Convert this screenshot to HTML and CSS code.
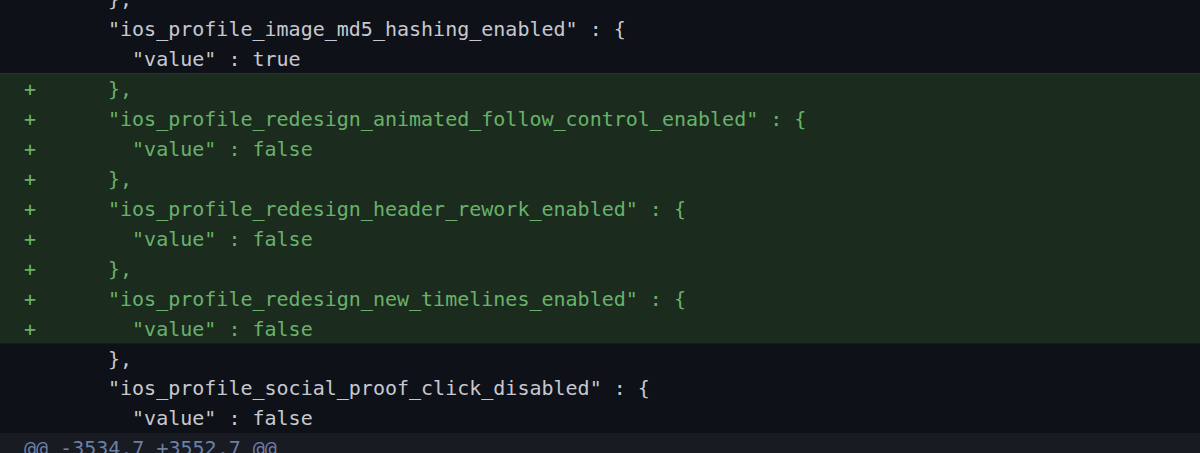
FILE: index.html
```html
<!DOCTYPE html>
<html>
<head>
<meta charset="utf-8">
<link rel="stylesheet" href="styles.css">
</head>
<body>
<div class="diff">
  <div class="row"><span class="sign"></span><span class="code">},</span></div>
  <div class="row"><span class="sign"></span><span class="code">"ios_profile_image_md5_hashing_enabled" : {</span></div>
  <div class="row"><span class="sign"></span><span class="code">  "value" : true</span></div>
  <div class="added">
    <div class="row"><span class="sign">+</span><span class="code">},</span></div>
    <div class="row"><span class="sign">+</span><span class="code">"ios_profile_redesign_animated_follow_control_enabled" : {</span></div>
    <div class="row"><span class="sign">+</span><span class="code">  "value" : false</span></div>
    <div class="row"><span class="sign">+</span><span class="code">},</span></div>
    <div class="row"><span class="sign">+</span><span class="code">"ios_profile_redesign_header_rework_enabled" : {</span></div>
    <div class="row"><span class="sign">+</span><span class="code">  "value" : false</span></div>
    <div class="row"><span class="sign">+</span><span class="code">},</span></div>
    <div class="row"><span class="sign">+</span><span class="code">"ios_profile_redesign_new_timelines_enabled" : {</span></div>
    <div class="row"><span class="sign">+</span><span class="code">  "value" : false</span></div>
  </div>
  <div class="row"><span class="sign"></span><span class="code">},</span></div>
  <div class="row"><span class="sign"></span><span class="code">"ios_profile_social_proof_click_disabled" : {</span></div>
  <div class="row"><span class="sign"></span><span class="code">  "value" : false</span></div>
  <div class="hunk">@@ -3534,7 +3552,7 @@</div>
</div>
</body>
</html>
```
FILE: styles.css
```css
html, body {
  margin: 0;
  padding: 0;
  background: #0f1119;
  overflow: hidden;
}
.diff {
  margin-top: -16px;
  font-family: "DejaVu Sans Mono", monospace;
  font-size: 20px;
  line-height: 30px;
  color: #c6c9cf;
}
.row {
  display: flex;
  height: 30px;
  white-space: pre;
}
.sign {
  width: 108px;
  padding-left: 24px;
  box-sizing: border-box;
  flex: none;
}
.code {
  white-space: pre;
}
.added {
  background: #1b2c1f;
  color: #69b26a;
  border-top: 1px solid #26362a;
  margin-top: -1px;
}
.added .row:last-child {
  height: 29px;
}
.added + .row {
  border-top: 1px solid #131a16;
  margin-top: 0;
  height: 29px;
}
.hunk {
  background: #181b22;
  color: #6d7fa3;
  padding-left: 24px;
  height: 30px;
  line-height: 30px;
}
```
